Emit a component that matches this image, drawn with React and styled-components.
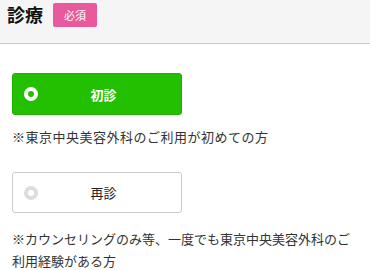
import React from 'react';
import styled, { createGlobalStyle } from 'styled-components';

const GlobalStyle = createGlobalStyle`
  body {
    margin: 0;
    background: #ffffff;
    font-family: "Noto Sans CJK JP", "Noto Sans", sans-serif;
    color: #333333;
  }
`

const Header = styled.div`
  height: 44px;
  box-sizing: border-box;
  background: #f5f5f5;
  border-bottom: 1px solid #cccccc;
  display: flex;
  align-items: flex-start;
  padding: 3px 8px 0 7px;
`

const Title = styled.h2`
  margin: 0;
  font-size: 18px;
  line-height: 22px;
  font-weight: 700;
  color: #111111;
`

const Badge = styled.span`
  margin-left: 10px;
  width: 44px;
  height: 24px;
  border-radius: 2px;
  background: #e85a9c;
  color: #ffffff;
  font-size: 11px;
  display: flex;
  align-items: center;
  justify-content: center;
`

const Body = styled.div`
  padding: 29px 12px 0 12px;
`

const Option = styled.div`
  width: 170px;
  height: ${(p) => (p.selected ? '42px' : '41px')};
  margin-top: ${(p) => p.top || '0'};
  box-sizing: border-box;
  display: flex;
  align-items: center;
  padding: 0 12px 0 11px;
  border-radius: 3px;
  background: ${(p) => (p.selected ? '#22c000' : '#ffffff')};
  border: 1px solid ${(p) => (p.selected ? '#1fb000' : '#cccccc')};
  cursor: pointer;
`

const Radio = styled.span`
  width: 14px;
  height: 14px;
  box-sizing: border-box;
  border-radius: 50%;
  border: 4px solid ${(p) => (p.selected ? '#ffffff' : '#dddddd')};
  background: ${(p) => (p.selected ? '#22c000' : '#ffffff')};
  flex-shrink: 0;
`

const Label = styled.span`
  flex: 1;
  text-align: center;
  font-size: 13px;
  font-weight: ${(p) => (p.selected ? 700 : 400)};
  color: ${(p) => (p.selected ? '#ffffff' : '#222222')};
`

const Note = styled.p`
  margin: ${(p) => p.top} 0 0 0;
  font-size: 13px;
  line-height: 22px;
  color: #333333;
  letter-spacing: ${(p) => p.spacing || '0'};
`

const App = () => {
  return (
    <>
      <GlobalStyle />
      <Header>
        <Title>診療</Title>
        <Badge>必須</Badge>
      </Header>
      <Body>
        <Option selected>
          <Radio selected />
          <Label selected>初診</Label>
        </Option>
        <Note top="11px" spacing="0.5px">※東京中央美容外科のご利用が初めての方</Note>

        <Option top="24px">
          <Radio />
          <Label>再診</Label>
        </Option>
        <Note top="15px">※カウンセリングのみ等、一度でも東京中央美容外科のご利用経験がある方</Note>
      </Body>
    </>
  )
}

export default App;
